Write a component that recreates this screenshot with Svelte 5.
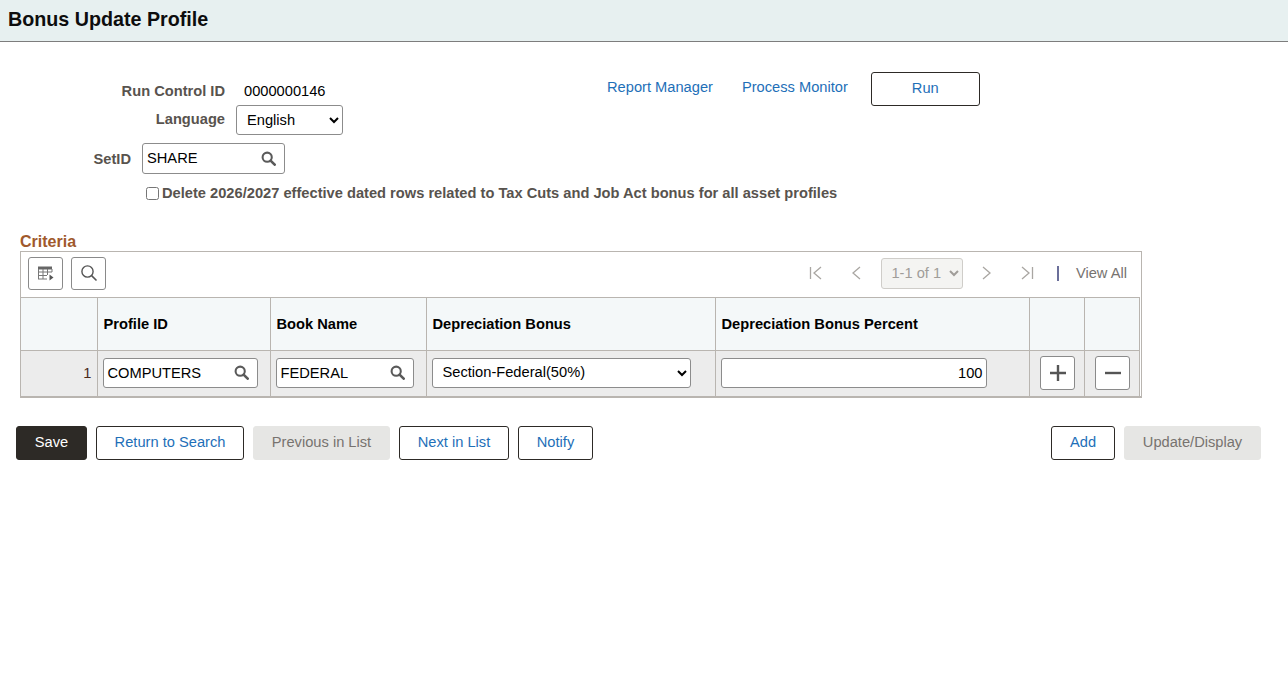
<script>
  const columns = [
    { label: '', width: 76 },
    { label: 'Profile ID', width: 173 },
    { label: 'Book Name', width: 156 },
    { label: 'Depreciation Bonus', width: 289 },
    { label: 'Depreciation Bonus Percent', width: 314 },
    { label: '', width: 55 },
    { label: '', width: 55 }
  ];
</script>

{#snippet lens(cls = 'lens')}
  <svg class={cls} viewBox="0 0 16 16" aria-hidden="true">
    <circle cx="6.6" cy="6.6" r="4.9" fill="none" stroke="currentColor" stroke-width="2.2" />
    <path d="M10.2 10.2 14.6 14.6" stroke="currentColor" stroke-width="2.8" stroke-linecap="round" />
  </svg>
{/snippet}

<header class="title"><h1>Bonus Update Profile</h1></header>

<main>
  <section class="top">
    <div class="form">
      <div class="row run"><span class="label w1">Run Control ID</span><span class="value">0000000146</span></div>
      <div class="row lang">
        <span class="label w1 up">Language</span>
        <select class="language"><option>English</option></select>
      </div>
      <div class="row setid">
        <span class="label w2">SetID</span>
        <span class="prompt p-set"><span class="ptext">SHARE</span>{@render lens()}</span>
      </div>
      <label class="check"><input type="checkbox" /><span>Delete 2026/2027 effective dated rows related to Tax Cuts and Job Act bonus for all asset profiles</span></label>
    </div>
    <nav class="links">
      <a href="#rm">Report Manager</a>
      <a href="#pm">Process Monitor</a>
      <button class="btn run-btn">Run</button>
    </nav>
  </section>

  <h2>Criteria</h2>
  <div class="grid">
    <div class="toolbar">
      <button class="tool" aria-label="Personalize">
        <svg viewBox="0 0 18 16" width="18" height="16" aria-hidden="true">
          <path d="M1 1.5h14v3H1z" fill="#666" />
          <path d="M1.5 4v10M6 4v10M10.5 4v6M1 7h14M1 10.5h9M1 14h9M15 4v3" stroke="#777" stroke-width="1" fill="none" />
          <path d="M12.5 9.5 16.5 12.5 12.5 15.5z" fill="#555" />
        </svg>
      </button>
      <button class="tool" aria-label="Find">
        <svg viewBox="0 0 18 18" width="18" height="18" aria-hidden="true">
          <circle cx="7.5" cy="7.5" r="5.6" fill="none" stroke="#555" stroke-width="1.4" />
          <path d="M11.6 11.6 16.5 16.5" stroke="#555" stroke-width="1.6" />
        </svg>
      </button>
      <div class="pager">
        <svg class="pg first" viewBox="0 0 14 14" aria-hidden="true"><path d="M1.5 1v12M12 1 5 7l7 6" /></svg>
        <svg class="pg prev" viewBox="0 0 14 14" aria-hidden="true"><path d="M10 1 3 7l7 6" /></svg>
        <select class="range" disabled><option>1-1 of 1</option></select>
        <svg class="pg next" viewBox="0 0 14 14" aria-hidden="true"><path d="M4 1l7 6-7 6" /></svg>
        <svg class="pg last" viewBox="0 0 14 14" aria-hidden="true"><path d="M2 1l7 6-7 6M12.5 1v12" /></svg>
        <span class="divider"></span>
        <span class="viewall">View All</span>
      </div>
    </div>
    <table>
      <colgroup>
        {#each columns as c}<col style="width:{c.width}px" />{/each}
      </colgroup>
      <thead>
        <tr>{#each columns as c}<th>{c.label}</th>{/each}</tr>
      </thead>
      <tbody>
        <tr>
          <td class="num">1</td>
          <td><span class="prompt p-profile"><span class="ptext">COMPUTERS</span>{@render lens()}</span></td>
          <td><span class="prompt p-book"><span class="ptext">FEDERAL</span>{@render lens()}</span></td>
          <td><select class="bonus"><option>Section-Federal(50%)</option></select></td>
          <td><span class="percent">100</span></td>
          <td class="act">
            <button class="tool square" aria-label="Add row">
              <svg class="glyph" viewBox="0 0 18 18" width="18" height="18" aria-hidden="true"><path d="M9 1v16M1 9h16" stroke="#555" stroke-width="2.4" /></svg>
            </button>
          </td>
          <td class="act">
            <button class="tool square" aria-label="Delete row">
              <svg class="glyph" viewBox="0 0 18 18" width="18" height="18" aria-hidden="true"><path d="M1 9h16" stroke="#555" stroke-width="2.4" /></svg>
            </button>
          </td>
        </tr>
      </tbody>
    </table>
  </div>

  <footer class="actions">
    <button class="btn primary w-save">Save</button>
    <button class="btn w-return">Return to Search</button>
    <button class="btn off w-prev">Previous in List</button>
    <button class="btn w-next">Next in List</button>
    <button class="btn w-notify">Notify</button>
    <span class="spacer"></span>
    <button class="btn w-add">Add</button>
    <button class="btn off w-update">Update/Display</button>
  </footer>
</main>

<style>
  :global(body) {
    margin: 0;
    background: #fff;
    font-family: "Liberation Sans", Arial, sans-serif;
    font-size: 14.67px;
    color: #000;
  }
  .title {
    height: 39px;
    background: #e7f0f0;
    border-bottom: 1px solid #7d7d7d;
    display: flex;
    align-items: center;
    padding-left: 8px;
    padding-bottom: 2px;
  }
  h1 { margin: 0; font-size: 19.7px; font-weight: 700; color: #0d0d0d; }

  main { padding: 30px 27px 0 16px; }

  .top { display: flex; align-items: flex-start; height: 161px; }
  .form { width: 591px; flex: none; }
  .row { display: flex; align-items: center; }
  .label { font-weight: 700; color: #58534e; text-align: right; flex: none; }
  .w1 { width: 209px; }
  .w2 { width: 115px; }
  .up { margin-top: -3px; }
  .run { height: 33px; padding-top: 4px; box-sizing: border-box; }
  .value { margin-left: 19px; color: #000; }
  .lang { height: 30px; }
  .language { margin-left: 11px; width: 107px; height: 30px; padding-left: 6px; }
  .setid { height: 31px; margin-top: 8px; }
  .p-set { margin-left: 11px; width: 143px; height: 31px; }

  select {
    font: inherit;
    color: #000;
    background: #fff;
    border: 1px solid #8c8c8c;
    border-radius: 3px;
    box-sizing: border-box;
  }
  .prompt {
    display: flex;
    align-items: center;
    justify-content: space-between;
    box-sizing: border-box;
    border: 1px solid #8c8c8c;
    border-radius: 3px;
    background: #fff;
    padding: 0 8px 0 4px;
    flex: none;
  }
  .ptext { margin-top: -1px; }
  .p-set .ptext { margin-top: -2px; }
  .lens { width: 15px; height: 15px; color: #5a5a5a; flex: none; margin-top: -1px; }

  .check { display: flex; align-items: center; margin: 10px 0 0 130px; height: 18px; white-space: nowrap; font-weight: 700; color: #58534e; }
  .check input { width: 13px; height: 13px; margin: 0 3px 0 0; flex: none; }

  .links { display: flex; align-items: flex-start; }
  .links a { color: #1e6fb8; text-decoration: none; line-height: 30px; }
  .links a + a { margin-left: 29px; }
  .btn {
    font: inherit;
    height: 34px;
    box-sizing: border-box;
    border: 1px solid #2d2a26;
    border-radius: 3px;
    background: #fff;
    color: #1e6fb8;
    padding: 0 0 2px;
    flex: none;
  }
  .run-btn { width: 109px; margin-left: 23px; }
  .primary { background: #2d2a26; color: #fff; }
  .off { background: #e6e6e4; border-color: #e6e6e4; color: #77736f; }

  h2 { margin: 0 0 0 4px; font-size: 16px; line-height: 18px; font-weight: 700; color: #a0592c; }

  .grid {
    margin-left: 4px;
    width: 1122px;
    box-sizing: border-box;
    border: 1px solid #b9b5b0;
    border-bottom-width: 2px;
  }
  .toolbar { height: 45px; display: flex; align-items: center; padding: 0 0 3px 7px; box-sizing: border-box; gap: 8px; }
  .tool {
    width: 35px;
    height: 33px;
    padding: 0;
    display: flex;
    align-items: center;
    justify-content: center;
    background: #fff;
    border: 1px solid #8a8a8a;
    border-radius: 3px;
  }
  .pager { margin-left: auto; display: flex; align-items: center; color: #77736f; padding-right: 14px; }
  .pg { width: 14px; height: 14px; fill: none; stroke: #a9a6a2; stroke-width: 1.3; flex: none; }
  .prev { margin-left: 27px; }
  .range {
    width: 82px;
    height: 31px;
    margin-left: 17px;
    padding-left: 5px;
    background: #f4f4f2;
    border-color: #cfcdc9;
    color: #a09d99;
    opacity: 1;
  }
  .next { margin-left: 16px; }
  .last { margin-left: 27px; }
  .divider { width: 1.5px; height: 15px; background: #6b6f9a; margin-left: 23px; }
  .viewall { margin-left: 17px; }

  table { border-collapse: collapse; table-layout: fixed; width: 1118px; }
  th, td { border: 1px solid #b9b5b0; padding: 0 5px; box-sizing: border-box; }
  tr > :first-child { border-left: 0; }
  tbody td { border-bottom: 0; }
  th { height: 53px; background: #f4f8f9; text-align: left; font-weight: 700; white-space: nowrap; padding-left: 6px; }
  td { height: 45px; background: #ececec; }
  .num { text-align: right; color: #4a2a1a; padding-right: 5px; }
  .p-profile { width: 155px; height: 30px; }
  .p-book { width: 138px; height: 30px; }
  .bonus { width: 259px; height: 30px; padding: 0 0 2px 6px; display: block; }
  .percent {
    display: block;
    width: 266px;
    height: 30px;
    line-height: 28px;
    box-sizing: border-box;
    border: 1px solid #8c8c8c;
    border-radius: 3px;
    background: #fff;
    text-align: right;
    padding-right: 3px;
  }
  .act { padding: 0 0 0 10px; }
  .square { height: 34px; }
  .glyph { margin-left: 1px; }

  .actions { display: flex; margin-top: 28px; gap: 9px; }
  .spacer { flex: 1; }
  .w-save { width: 71px; }
  .w-return { width: 148px; }
  .w-prev { width: 137px; }
  .w-next { width: 110px; }
  .w-notify { width: 75px; }
  .w-add { width: 64px; }
  .w-update { width: 137px; }
</style>
